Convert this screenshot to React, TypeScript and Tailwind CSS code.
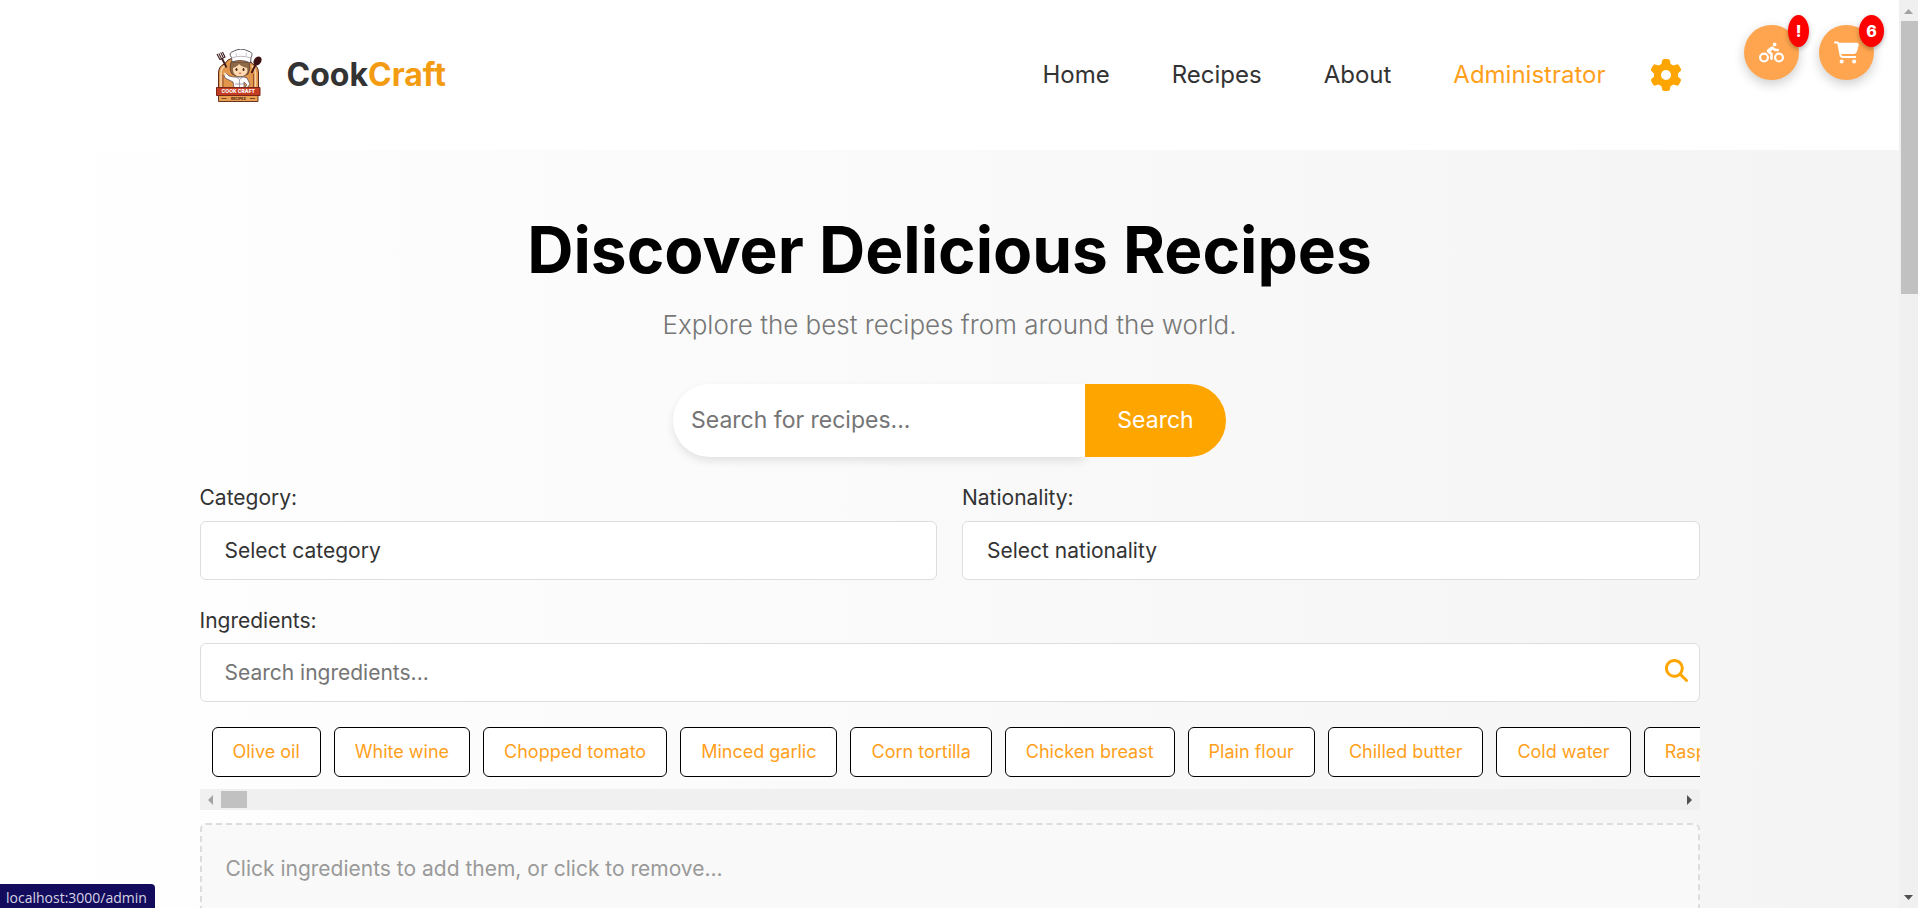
import { FaCartShopping, FaGear, FaMagnifyingGlass, FaPersonBiking } from "react-icons/fa6";

const ingredients = [
  "Olive oil",
  "White wine",
  "Chopped tomato",
  "Minced garlic",
  "Corn tortilla",
  "Chicken breast",
  "Plain flour",
  "Chilled butter",
  "Cold water",
  "Raspberry",
];

export default function App() {
  return (
    <div className="flex h-screen overflow-hidden font-[Inter,sans-serif] text-[#333]">
      <div className="flex-1 min-w-0 overflow-hidden bg-linear-to-r from-white to-[#f4f4f4]">
        <Header />
        <main className="max-w-[1500px] mx-auto pt-16">
          <Hero />
          <Filters />
        </main>
      </div>
      <PageScrollbar />
      <FloatingButtons />
      <div className="absolute left-0 bottom-0 h-6 px-2 pl-1.5 rounded-tr bg-[#130c5c] text-[#d5d3e2] text-sm leading-7 font-['Open_Sans',sans-serif]">
        localhost:3000/admin
      </div>
    </div>
  );
}

function Header() {
  return (
    <header className="h-[150px] bg-white">
      <div className="max-w-[1500px] h-full mx-auto pl-4 pr-[18px] flex items-center justify-between">
        <a href="#" className="flex items-center gap-[25px]">
          <Logo />
          <span className="text-[32px] font-bold">
            Cook<span className="text-[#f39c12]">Craft</span>
          </span>
        </a>
        <nav className="flex items-center text-2xl">
          <a href="#" className="mr-[62px]">Home</a>
          <a href="#" className="mr-[62px]">Recipes</a>
          <a href="#" className="mr-[62px]">About</a>
          <a href="#" className="mr-11 text-[#ff9f1c]">Administrator</a>
          <button aria-label="Settings" className="text-[#ffa500]">
            <FaGear size={32} />
          </button>
        </nav>
      </div>
    </header>
  );
}

function Hero() {
  return (
    <section className="flex flex-col items-center">
      <h1 className="text-[64px] leading-[72px] font-bold text-black">Discover Delicious Recipes</h1>
      <p className="mt-5 text-[26px] leading-[38px] font-light text-[#777]">
        Explore the best recipes from around the world.
      </p>
      <form className="mt-10 flex h-[73px] text-[23px]">
        <input
          aria-label="Search for recipes"
          placeholder="Search for recipes..."
          className="w-[412px] px-[18px] rounded-l-full bg-white shadow-[0_4px_8px_rgba(0,0,0,0.1)] placeholder:text-[#757575] outline-none"
        />
        <button type="button" className="relative w-[141px] rounded-r-full bg-[#ffa500] text-white">
          Search
        </button>
      </form>
    </section>
  );
}

function Filters() {
  return (
    <section className="mt-6 text-[21px]">
      <div className="grid grid-cols-2 gap-[25px]">
        <Select id="category" label="Category:" placeholder="Select category" />
        <Select id="nationality" label="Nationality:" placeholder="Select nationality" />
      </div>
      <label htmlFor="ingredients" className="block mt-6 mb-[5px] leading-[34px]">Ingredients:</label>
      <div className="relative">
        <input
          id="ingredients"
          placeholder="Search ingredients..."
          className="block w-full h-[59px] px-6 rounded-md border border-[#ddd] bg-white placeholder:text-[#757575] outline-none"
        />
        <button aria-label="Search ingredients" className="absolute right-3 top-4 text-[#ffa500]">
          <FaMagnifyingGlass size={23} />
        </button>
      </div>
      <div className="mt-[25px] pl-3 flex gap-[13px] overflow-hidden">
        {ingredients.map((name) => (
          <button
            key={name}
            className="shrink-0 h-[50px] px-5 rounded-md border border-black bg-white text-lg text-[#ff9f1c]"
          >
            {name}
          </button>
        ))}
      </div>
      <div className="mt-3 h-[21px] px-1.5 flex items-center justify-between bg-[#f0f0f0]">
        <div className="flex items-center gap-2">
          <svg width="7" height="10" viewBox="0 0 7 10" fill="#a3a3a3"><path d="M7 0v10L2 5z" /></svg>
          <div className="w-[26px] h-[17px] bg-[#c1c1c1]" />
        </div>
        <svg width="7" height="10" viewBox="0 0 7 10" fill="#505050"><path d="M0 0v10l5-5z" /></svg>
      </div>
      <div className="mt-[13px] h-40 px-6 py-7 rounded-md border-2 border-dashed border-[#ddd] bg-[#f9f9f9] text-[#999]">
        Click ingredients to add them, or click to remove...
      </div>
    </section>
  );
}

function Select({ id, label, placeholder }: { id: string; label: string; placeholder: string }) {
  return (
    <div>
      <label htmlFor={id} className="block mb-1.5 leading-[34px]">{label}</label>
      <select
        id={id}
        className="block appearance-none w-full h-[59px] px-6 rounded-md border border-[#ddd] bg-white outline-none"
      >
        <option>{placeholder}</option>
      </select>
    </div>
  );
}

function FloatingButtons() {
  return (
    <div className="absolute top-[25px] right-11 flex gap-5 text-white">
      <button aria-label="Deliveries" className="relative size-[55px] rounded-full bg-[#ffa54f] shadow-[0_4px_12px_rgba(0,0,0,0.2)] flex items-center justify-center">
        <FaPersonBiking size={25} />
        <span className="absolute -top-2.5 -right-2.5 w-[21px] h-8 rounded-[50%] bg-[#f00] shadow-[0_2px_5px_rgba(0,0,0,0.3)] text-base leading-8 font-extrabold">!</span>
      </button>
      <button aria-label="Cart" className="relative size-[55px] rounded-full bg-[#ffa54f] shadow-[0_4px_12px_rgba(0,0,0,0.2)] flex items-center justify-center">
        <FaCartShopping size={25} />
        <span className="absolute -top-2.5 -right-2.5 w-[25px] h-8 rounded-[50%] bg-[#f00] shadow-[0_2px_5px_rgba(0,0,0,0.3)] text-base leading-8 font-extrabold">6</span>
      </button>
    </div>
  );
}

function PageScrollbar() {
  return (
    <div className="w-[19px] shrink-0 py-2 flex flex-col items-center bg-[#f0f0f0]">
      <svg width="9" height="6" viewBox="0 0 9 6" fill="#a3a3a3"><path d="M0 6l4.5-5L9 6z" /></svg>
      <div className="mt-[7px] ml-0.5 w-[17px] h-[273px] bg-[#c1c1c1]" />
      <svg className="mt-auto" width="9" height="5" viewBox="0 0 9 5" fill="#505050"><path d="M0 0h9L4.5 5z" /></svg>
    </div>
  );
}

function Logo() {
  return (
    <svg width="46" height="53" viewBox="0 0 46 53">
      {/* arch */}
      <path d="M2.5 39V24q0-7 6-9 3-5 8-6h12q6 1 8 6 6 2 6 9v15z" fill="#e2974c" stroke="#5b2b1c" />
      <path d="M5 38V24q0-5 4-7M39.5 38V24q0-5-4-7" fill="none" stroke="#f6d3a8" strokeWidth="1.5" />
      <path d="M7 38V25M37.5 38V25" stroke="#7e3f22" strokeWidth=".8" />
      {/* fork and spoon */}
      <path d="M1 5l3 5.5 5-2.5-2.5-5M2.8 4.5l2.5 4.5M4.7 3.6L7 8" fill="none" stroke="#3d1a1c" strokeWidth="1.1" />
      <path d="M6 9.5l4.5 9" stroke="#3d1a1c" strokeWidth="1.8" />
      <path d="M40 15l-4.5 9" stroke="#3d1014" strokeWidth="1.8" />
      <ellipse cx="41.5" cy="12" rx="3.6" ry="5" transform="rotate(35 41.5 12)" fill="#3d1014" />
      {/* hair and face */}
      <path d="M15 13q-2 8 1 12 8 5 16 0 3-5 1-12z" fill="#8f6a48" stroke="#4d2e20" strokeWidth=".7" />
      <path d="M17 19q1-4 5-4 5-1 9 3l.5 4q-1 5-7.5 5.5Q17.5 27 17 21z" fill="#ffd9b0" />
      <path d="M16 19q5-1 7-4 3 3 9 4l-1-5H17z" fill="#8f6a48" />
      <ellipse cx="20.5" cy="20.5" rx="1" ry="1.5" fill="#3f2418" />
      <ellipse cx="27.5" cy="20.5" rx="1" ry="1.5" fill="#3f2418" />
      <path d="M22.5 23.8q1.5 2 3 0z" fill="#b8362a" />
      {/* hat */}
      <path d="M16 13l-.5-4.5Q12 4 17 2.5 25-2 32 2q6 1.5 3 6.5L34.5 14Q25 9.5 16 13z" fill="#fff" stroke="#4f4650" strokeWidth=".9" />
      <path d="M15.5 9q9-3.5 19.5 0" fill="none" stroke="#aaa5b2" strokeWidth=".8" />
      <path d="M20 4l.5 3.5M30.5 3.5L30 7" stroke="#cbc8d2" />
      {/* jacket */}
      <path d="M18 28l-5-1-3-3-2 1 1 4 8 4 1 6h10v-6l3 3-3 3h3l3-4-3-6-3-1z" fill="#fff" stroke="#5e5360" strokeWidth=".8" />
      <circle cx="9" cy="25" r="1.5" fill="#ffd9b0" />
      <path d="M20 27.5l3.5 3 4-3M23.5 31v7M19 35h9" fill="none" stroke="#8f8794" strokeWidth=".8" />
      {/* banner */}
      <path d="M2.5 45.5H42v7H2.5z" fill="#e8a050" stroke="#6b3420" />
      <path d="M.5 38.5h43.500v8H.5z" fill="#c43c22" stroke="#7b2619" />
      <text x="22.3" y="44.3" textAnchor="middle" fontSize="5" fontWeight="800" fill="#fff">COOK CRAFT</text>
      <text x="22.3" y="51" textAnchor="middle" fontSize="3.5" fontWeight="800" fill="#5b2b1c">RECIPES</text>
      <path d="M5.500 49.500h5M34 49.500h5" stroke="#5b2b1c" strokeWidth=".8" />
    </svg>
  );
}
